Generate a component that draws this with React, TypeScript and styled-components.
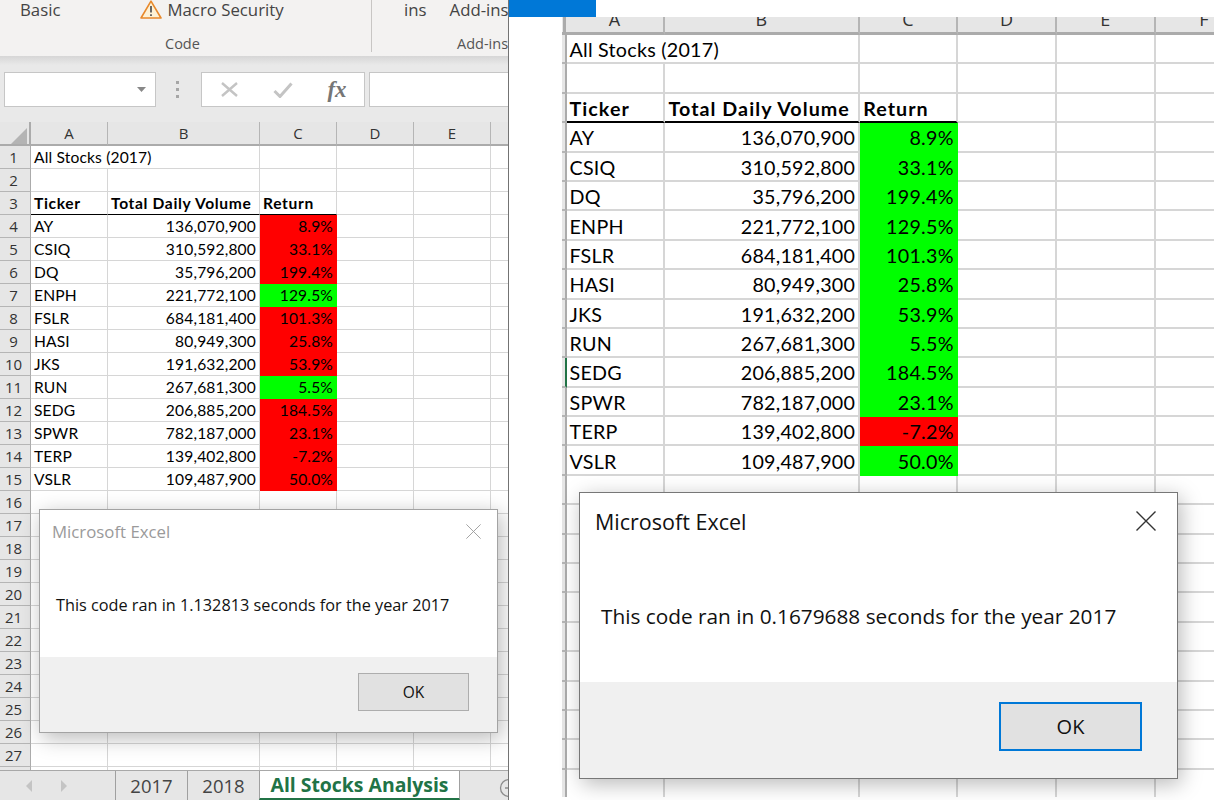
import React from 'react';
import styled, { createGlobalStyle } from 'styled-components';

const UI_FONT = '"Open Sans", "Noto Sans", sans-serif';
const CELL_FONT = 'Lato, "Open Sans", sans-serif';

const GlobalStyle = createGlobalStyle`
  html, body { margin: 0; padding: 0; background: #fff; }
  #root { width: 1214px; height: 800px; overflow: hidden; }
`;

type SheetMetrics = {
  columns: string;
  headHeight: number;
  rowHeight: number;
  line: number;
  font: number;
  headFont: number;
  padLeft: number;
  padRight: number;
  rule: number;
  spacing: number;
  boldSpacing: number;
  drop: number;
  headDrop: number;
};

const LEFT_SHEET: SheetMetrics = {
  columns: '31px 77px 152px 77px 77px 77px 77px',
  headHeight: 24,
  rowHeight: 23,
  line: 1,
  font: 15.6,
  headFont: 15,
  padLeft: 3,
  padRight: 3,
  rule: 1,
  spacing: 0.15,
  boldSpacing: 0.65,
  drop: 0,
  headDrop: 1,
};

const RIGHT_SHEET: SheetMetrics = {
  columns: '4px 99px 194.7px 98.5px 98.7px 98.7px 98.7px',
  headHeight: 18,
  rowHeight: 29.4,
  line: 2,
  font: 19.7,
  headFont: 18,
  padLeft: 3.5,
  padRight: 2.5,
  rule: 2,
  spacing: 0.25,
  boldSpacing: 1.05,
  drop: 2,
  headDrop: 2,
};

const Page = styled.div`
  display: flex;
  width: 1214px;
  height: 800px;
  background: #fff;
`;

const LeftWindow = styled.div`
  position: relative;
  display: flex;
  flex-direction: column;
  flex: none;
  box-sizing: border-box;
  width: 509px;
  height: 800px;
  overflow: hidden;
  border-right: 1px solid #737373;
  font-family: ${UI_FONT};
`;

const Ribbon = styled.div`
  display: flex;
  flex: none;
  height: 56px;
  background: #f3f2f1;
  color: #444;
`;

const RibbonGroup = styled.div<{ $width: number }>`
  display: flex;
  flex: none;
  flex-direction: column;
  justify-content: space-between;
  box-sizing: border-box;
  width: ${p => p.$width}px;
  height: 52px;
  overflow: hidden;
`;

const CodeGroup = styled(RibbonGroup)`
  border-right: 1px solid #c8c6c4;
`;

const RibbonItems = styled.div<{ $indent: number; $gap: number }>`
  display: flex;
  align-items: center;
  gap: ${p => p.$gap}px;
  height: 19px;
  padding-left: ${p => p.$indent}px;
  font-size: 16.8px;
  line-height: 19px;
  white-space: nowrap;
`;

const IconItem = styled.span`
  display: flex;
  align-items: center;
  gap: 5px;
`;

const GroupLabel = styled.div<{ $indent: number }>`
  padding-left: ${p => p.$indent}px;
  font-size: 14.5px;
  line-height: 16px;
  color: #555;
  white-space: nowrap;
`;

const FormulaBar = styled.div`
  display: flex;
  flex: none;
  align-items: flex-start;
  box-sizing: border-box;
  height: 66px;
  padding: 16px 0 0 4px;
  background: linear-gradient(#d6d6d6 0, #e9e9e9 9px, #e9e9e9 100%);
`;

const NameBox = styled.div`
  display: flex;
  flex: none;
  align-items: center;
  justify-content: flex-end;
  box-sizing: border-box;
  width: 152px;
  height: 35px;
  padding-right: 9px;
  background: #fff;
  border: 1px solid #c6c6c6;
`;

const Grip = styled.div`
  display: flex;
  flex: none;
  flex-direction: column;
  align-items: center;
  justify-content: center;
  gap: 4px;
  width: 45px;
  height: 35px;
  padding-right: 2px;
  box-sizing: border-box;
`;

const GripDot = styled.span`
  width: 3px;
  height: 3px;
  background: #a6a6a6;
`;

const FormulaButtons = styled.div`
  display: flex;
  flex: none;
  align-items: center;
  box-sizing: border-box;
  width: 164px;
  height: 35px;
  background: #fff;
  border: 1px solid #c6c6c6;
`;

const FormulaButton = styled.span`
  display: flex;
  align-items: center;
  justify-content: center;
  width: 54px;
  height: 33px;
`;

const FxLabel = styled.span`
  font-family: "Liberation Serif", serif;
  font-size: 23px;
  font-style: italic;
  font-weight: 700;
  color: #767676;
`;

const FormulaInput = styled.div`
  flex: 1;
  height: 35px;
  margin-left: 4px;
  box-sizing: border-box;
  background: #fff;
  border: 1px solid #c6c6c6;
  border-right: 0;
`;

const SheetClip = styled.div<{ $height: number }>`
  flex: none;
  height: ${p => p.$height}px;
  overflow: hidden;
  background: #fff;
`;

const SheetGrid = styled.div<{ $m: SheetMetrics }>`
  display: grid;
  grid-template-columns: ${p => p.$m.columns};
  grid-template-rows: ${p => p.$m.headHeight}px;
  grid-auto-rows: ${p => p.$m.rowHeight}px;
  width: max-content;
  font-family: ${CELL_FONT};
  color: #000;
`;

const Corner = styled.div<{ $m: SheetMetrics }>`
  position: relative;
  box-sizing: border-box;
  background: #e6e6e6;
  border-bottom: ${p => p.$m.rule + 1}px solid #ababab;
  border-right: ${p => p.$m.rule + 1}px solid #ababab;
`;

const CornerMark = styled.svg`
  position: absolute;
  left: 11px;
  top: 6px;
`;

const ColHead = styled.div<{ $m: SheetMetrics }>`
  display: flex;
  align-items: flex-end;
  justify-content: center;
  box-sizing: border-box;
  overflow: hidden;
  padding-bottom: ${p => p.$m.headDrop}px;
  background: #e6e6e6;
  border-bottom: ${p => p.$m.rule + 1}px solid #ababab;
  border-right: ${p => p.$m.rule}px solid #b5b5b5;
  font-family: ${UI_FONT};
  font-size: ${p => p.$m.headFont}px;
  line-height: ${p => (p.$m.line === 1 ? 20 : 22)}px;
  color: #333;
`;

const RowHead = styled.div<{ $m: SheetMetrics; $marked?: boolean }>`
  position: relative;
  display: flex;
  align-items: center;
  justify-content: center;
  box-sizing: border-box;
  overflow: hidden;
  padding-right: 3px;
  background: #e6e6e6;
  border-bottom: ${p => p.$m.rule}px solid #b5b5b5;
  border-right: ${p => p.$m.rule}px solid ${p => (p.$marked ? '#217346' : '#ababab')};
  font-family: ${UI_FONT};
  font-size: ${p => p.$m.headFont}px;
  color: #333;
`;

const Cell = styled.div<{
  $m: SheetMetrics;
  $fill?: string;
  $right?: boolean;
  $bold?: boolean;
  $underline?: boolean;
  $span?: number;
}>`
  display: flex;
  align-items: center;
  justify-content: ${p => (p.$right ? 'flex-end' : 'flex-start')};
  box-sizing: border-box;
  grid-column: span ${p => p.$span ?? 1};
  padding: ${p => p.$m.drop}px ${p => p.$m.padRight}px 0 ${p => p.$m.padLeft}px;
  white-space: nowrap;
  background: ${p => p.$fill ?? '#fff'};
  border-right: ${p => p.$m.line}px solid ${p => p.$fill ?? '#d6d6d6'};
  border-bottom: ${p => p.$m.line}px solid
    ${p => (p.$underline ? '#000' : p.$fill ?? '#d6d6d6')};
  font-size: ${p => p.$m.font}px;
  font-weight: ${p => (p.$bold ? 700 : 400)};
  letter-spacing: ${p => (p.$bold ? p.$m.boldSpacing : p.$m.spacing)}px;
`;

const TabBar = styled.div`
  display: flex;
  flex: none;
  box-sizing: border-box;
  height: 30px;
  padding-left: 115px;
  background: #e6e6e6;
  border-top: 1px solid #a8a8a8;
`;

const NavArrows = styled.div`
  display: flex;
  flex: none;
  align-items: center;
  gap: 28px;
  margin-left: -89px;
  width: 89px;
`;

const Tab = styled.div<{ $active?: boolean }>`
  display: flex;
  flex: none;
  align-items: center;
  justify-content: center;
  box-sizing: border-box;
  width: ${p => (p.$active ? '201px' : '72px')};
  height: 29px;
  background: ${p => (p.$active ? '#fff' : 'transparent')};
  border-left: 1px solid #a0a0a0;
  border-right: ${p => (p.$active ? '1px solid #a0a0a0' : '0')};
  border-bottom: ${p => (p.$active ? '2px solid #217346' : '0')};
  font-size: ${p => (p.$active ? 19.4 : 18.5)}px;
  font-weight: ${p => (p.$active ? 700 : 400)};
  color: ${p => (p.$active ? '#217346' : '#444')};
`;

const AddSheet = styled.svg`
  flex: none;
  margin: 7px 0 0 39px;
`;

const RightPane = styled.div`
  position: relative;
  display: flex;
  flex: 1;
  flex-direction: column;
  font-family: ${UI_FONT};
`;

const TitleBand = styled.div`
  flex: none;
  height: 17px;
  background: #fff;
`;

const TitleAccent = styled.div`
  width: 87px;
  height: 17px;
  background: #0078d7;
`;

const RightBody = styled.div`
  display: flex;
  flex: none;
  height: 780px;
  padding-left: 53px;
  padding-right: 7px;
`;

const DialogBox = styled.div<{ $left: number; $top: number; $width: number; $height: number; $dim?: boolean }>`
  position: absolute;
  left: ${p => p.$left}px;
  top: ${p => p.$top}px;
  display: flex;
  flex-direction: column;
  box-sizing: border-box;
  width: ${p => p.$width}px;
  height: ${p => p.$height}px;
  background: #fff;
  border: ${p => (p.$dim ? '1px solid #a3a3a3' : '1.5px solid #777')};
  box-shadow: 3px 5px 20px rgba(0, 0, 0, 0.28);
  font-family: ${UI_FONT};
`;

const DialogMain = styled.div<{ $padX: number }>`
  position: relative;
  display: flex;
  flex: 1;
  align-items: center;
  padding: 0 ${p => p.$padX}px;
`;

const DialogTitle = styled.div<{ $size: number; $top: number; $left: number; $dim?: boolean }>`
  position: absolute;
  left: ${p => p.$left}px;
  top: ${p => p.$top}px;
  font-size: ${p => p.$size}px;
  line-height: 1.3;
  color: ${p => (p.$dim ? '#9a9a9a' : '#111')};
  white-space: nowrap;
`;

const DialogClose = styled.svg<{ $right: number; $top: number }>`
  position: absolute;
  right: ${p => p.$right}px;
  top: ${p => p.$top}px;
`;

const DialogText = styled.div<{ $size: number; $shift: number }>`
  margin-top: ${p => p.$shift}px;
  font-size: ${p => p.$size}px;
  color: #111;
  white-space: nowrap;
`;

const DialogFooter = styled.div<{ $height: number; $padRight: number; $padTop: number }>`
  display: flex;
  flex: none;
  align-items: flex-start;
  justify-content: flex-end;
  box-sizing: border-box;
  height: ${p => p.$height}px;
  padding: ${p => p.$padTop}px ${p => p.$padRight}px 0 0;
  background: #f0f0f0;
`;

const OkButton = styled.div<{ $w: number; $h: number; $size: number; $focused?: boolean }>`
  display: flex;
  align-items: center;
  justify-content: center;
  box-sizing: border-box;
  width: ${p => p.$w}px;
  height: ${p => p.$h}px;
  background: #e1e1e1;
  border: ${p => (p.$focused ? '2.5px solid #0078d7' : '1px solid #adadad')};
  font-size: ${p => p.$size}px;
  color: #111;
`;

const ROWS: [string, string, string][] = [
  ['AY', '136,070,900', '8.9%'],
  ['CSIQ', '310,592,800', '33.1%'],
  ['DQ', '35,796,200', '199.4%'],
  ['ENPH', '221,772,100', '129.5%'],
  ['FSLR', '684,181,400', '101.3%'],
  ['HASI', '80,949,300', '25.8%'],
  ['JKS', '191,632,200', '53.9%'],
  ['RUN', '267,681,300', '5.5%'],
  ['SEDG', '206,885,200', '184.5%'],
  ['SPWR', '782,187,000', '23.1%'],
  ['TERP', '139,402,800', '-7.2%'],
  ['VSLR', '109,487,900', '50.0%'],
];

const COLS = ['A', 'B', 'C', 'D', 'E', 'F'];
const GREEN = '#00ff00';
const RED = '#ff0000';

function Sheet({ m, rowCount, numbers, colour, markedRow }: {
  m: SheetMetrics;
  rowCount: number;
  numbers: boolean;
  colour: (ticker: string) => string;
  markedRow?: number;
}) {
  const blank = (row: number, from: number) =>
    COLS.slice(from).map(c => <Cell key={`${row}${c}`} $m={m} />);

  const rows: React.ReactNode[] = [];
  for (let r = 1; r <= rowCount; r++) {
    const data = ROWS[r - 4];
    rows.push(
      <RowHead key={`h${r}`} $m={m} $marked={r === markedRow}>{numbers ? r : ''}</RowHead>
    );
    if (r === 1) {
      rows.push(<Cell key="title" $m={m} $span={2}>All Stocks (2017)</Cell>, ...blank(r, 2));
    } else if (r === 3) {
      rows.push(
        <Cell key="t" $m={m} $bold $underline>Ticker</Cell>,
        <Cell key="v" $m={m} $bold $underline>Total Daily Volume</Cell>,
        <Cell key="r" $m={m} $bold $underline>Return</Cell>,
        ...blank(r, 3)
      );
    } else if (data) {
      rows.push(
        <Cell key={`a${r}`} $m={m}>{data[0]}</Cell>,
        <Cell key={`b${r}`} $m={m} $right>{data[1]}</Cell>,
        <Cell key={`c${r}`} $m={m} $right $fill={colour(data[0])}>{data[2]}</Cell>,
        ...blank(r, 3)
      );
    } else {
      rows.push(...blank(r, 0));
    }
  }

  return (
    <SheetGrid $m={m}>
      <Corner $m={m}>
        {numbers && (
          <CornerMark width="16" height="16" viewBox="0 0 16 16">
            <path d="M16 0V16H0Z" fill="#b4b4b4" />
          </CornerMark>
        )}
      </Corner>
      {COLS.map(c => <ColHead key={c} $m={m}>{c}</ColHead>)}
      {rows}
    </SheetGrid>
  );
}

function WarningIcon() {
  return (
    <svg width="22" height="19" viewBox="0 0 22 19">
      <path d="M11 1.2 21 18H1Z" fill="#fdf2d6" stroke="#e8892b" strokeWidth="1.6" strokeLinejoin="round" />
      <path d="M11 6v6.5M11 14.2v1.8" stroke="#5a5a5a" strokeWidth="1.8" />
    </svg>
  );
}

function CloseGlyph({ size, color, right, top, width }: {
  size: number; color: string; right: number; top: number; width: number;
}) {
  return (
    <DialogClose $right={right} $top={top} width={size} height={size} viewBox="0 0 20 20">
      <path d="M0.5 0.5 19.5 19.5M19.5 0.5 0.5 19.5" stroke={color} strokeWidth={width} fill="none" />
    </DialogClose>
  );
}

export default function App() {
  return (
    <Page>
      <GlobalStyle />
      <LeftWindow>
        <Ribbon>
          <CodeGroup $width={372}>
            <RibbonItems $indent={20} $gap={80}>
              <span>Basic</span>
              <IconItem><WarningIcon />Macro Security</IconItem>
            </RibbonItems>
            <GroupLabel $indent={165}>Code</GroupLabel>
          </CodeGroup>
          <RibbonGroup $width={136}>
            <RibbonItems $indent={32} $gap={23}>
              <span>ins</span>
              <span>Add-ins</span>
            </RibbonItems>
            <GroupLabel $indent={85}>Add-ins</GroupLabel>
          </RibbonGroup>
        </Ribbon>
        <FormulaBar>
          <NameBox>
            <svg width="9" height="5" viewBox="0 0 9 5"><path d="M0 0H9L4.5 5Z" fill="#888" /></svg>
          </NameBox>
          <Grip><GripDot /><GripDot /><GripDot /></Grip>
          <FormulaButtons>
            <FormulaButton>
              <svg width="17" height="15" viewBox="0 0 17 15">
                <path d="M1 1 16 14M16 1 1 14" stroke="#c4c4c4" strokeWidth="2.4" fill="none" />
              </svg>
            </FormulaButton>
            <FormulaButton>
              <svg width="20" height="16" viewBox="0 0 20 16">
                <path d="M1.5 9 7 14.5 18.5 1.5" stroke="#c4c4c4" strokeWidth="3" fill="none" />
              </svg>
            </FormulaButton>
            <FormulaButton><FxLabel>fx</FxLabel></FormulaButton>
          </FormulaButtons>
          <FormulaInput />
        </FormulaBar>
        <SheetClip $height={648}>
          <Sheet m={LEFT_SHEET} rowCount={28} numbers colour={t => (t === 'ENPH' || t === 'RUN' ? GREEN : RED)} />
        </SheetClip>
        <TabBar>
          <NavArrows>
            <svg width="7" height="12" viewBox="0 0 7 12"><path d="M6 0V12L0 6Z" fill="#c4c4c4" /></svg>
            <svg width="7" height="12" viewBox="0 0 7 12"><path d="M0 0V12L6 6Z" fill="#c4c4c4" /></svg>
          </NavArrows>
          <Tab>2017</Tab>
          <Tab>2018</Tab>
          <Tab $active>All Stocks Analysis</Tab>
          <AddSheet width="20" height="20" viewBox="0 0 20 20">
            <circle cx="10" cy="10" r="8.5" fill="none" stroke="#8c8c8c" strokeWidth="1.3" />
            <path d="M6 10H14M10 6V14" stroke="#8c8c8c" strokeWidth="1.3" />
          </AddSheet>
        </TabBar>
        <DialogBox $left={39} $top={509} $width={459} $height={224} $dim>
          <DialogMain $padX={16}>
            <DialogTitle $size={16.8} $top={11} $left={12} $dim>Microsoft Excel</DialogTitle>
            <CloseGlyph size={15} color="#9a9a9a" right={16} top={14} width={1.2} />
            <DialogText $size={16.25} $shift={42}>This code ran in 1.132813 seconds for the year 2017</DialogText>
          </DialogMain>
          <DialogFooter $height={75} $padRight={28} $padTop={16}>
            <OkButton $w={111} $h={38} $size={15.5}>OK</OkButton>
          </DialogFooter>
        </DialogBox>
      </LeftWindow>
      <RightPane>
        <TitleBand><TitleAccent /></TitleBand>
        <RightBody>
          <SheetClip $height={780}>
            <Sheet m={RIGHT_SHEET} rowCount={27} numbers={false} colour={t => (t === 'TERP' ? RED : GREEN)} markedRow={12} />
          </SheetClip>
        </RightBody>
        <DialogBox $left={70} $top={492} $width={599} $height={287}>
          <DialogMain $padX={21}>
            <DialogTitle $size={21.5} $top={15} $left={15}>Microsoft Excel</DialogTitle>
            <CloseGlyph size={20} color="#333" right={21} top={18} width={1.4} />
            <DialogText $size={20.8} $shift={56}>This code ran in 0.1679688 seconds for the year 2017</DialogText>
          </DialogMain>
          <DialogFooter $height={96} $padRight={35} $padTop={20}>
            <OkButton $w={143} $h={49} $size={20} $focused>OK</OkButton>
          </DialogFooter>
        </DialogBox>
      </RightPane>
    </Page>
  );
}
